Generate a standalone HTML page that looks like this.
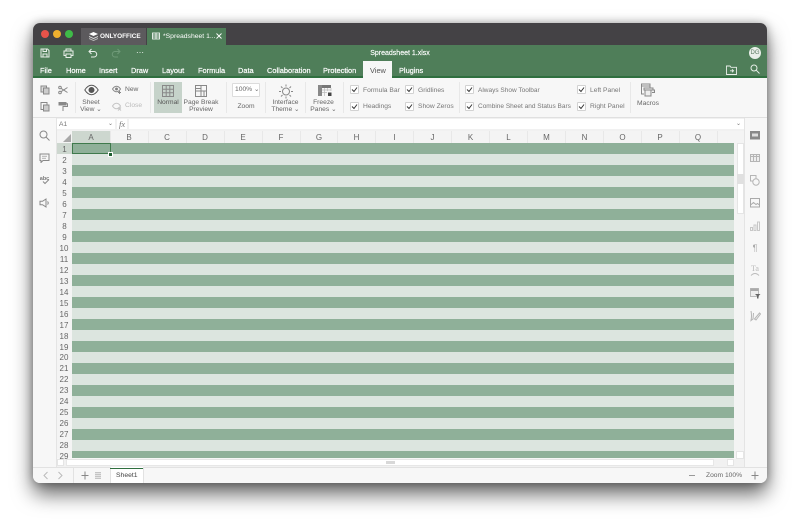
<!DOCTYPE html>
<html><head><meta charset="utf-8"><style>
html,body{margin:0;padding:0;background:#fff;width:800px;height:526px;overflow:hidden;font-family:"Liberation Sans",Arial,sans-serif}
#w{position:absolute;left:33px;top:23px;width:734px;height:460px;border-radius:7px;box-shadow:0 11px 20px rgba(0,0,0,.6),0 0 9px rgba(0,0,0,.3)}
#c{position:absolute;left:0;top:0;width:800px;height:526px;clip-path:inset(23px 33px 43px 33px round 7px);filter:blur(.3px)}
.a{position:absolute}
.t{position:absolute;white-space:nowrap;font-size:6.7px;line-height:9px;color:#666}
.c{text-align:center;transform:translateX(-50%)}
.m{color:#fff;font-size:7.4px;font-weight:400;-webkit-text-stroke:.2px #fff}
.h{color:#666;font-size:8px;line-height:11px;transform:translateX(-50%)}
.r{color:#666;font-size:8px;line-height:11px;transform:translateX(-50%)}
.cb{position:absolute;width:7px;height:7px;background:#fff;border:1px solid #d2d2d2;border-radius:1px}
.cb svg{position:absolute;left:0;top:0}
.sep{position:absolute;top:82px;height:31px;width:1px;background:#e8e8e8}
svg.i{position:absolute;fill:none;stroke:#888;stroke-width:1}
.l7{line-height:7px;text-align:center}
</style></head><body>
<div id="w"></div>
<div id="c">
<div class="a" style="left:33px;top:23px;width:734px;height:22px;background:#444245"></div>
<div class="a" style="left:33px;top:45px;width:734px;height:32px;background:#4f7e59"></div>
<div class="a" style="left:33px;top:76px;width:734px;height:1.500px;background:#2f6f3f"></div>
<div class="a" style="left:33px;top:77.500px;width:734px;height:390px;background:#f7f7f7"></div>
<div class="a" style="left:33px;top:117px;width:734px;height:1px;background:#e0e0e0"></div>

<!-- title -->
<div class="a" style="left:41px;top:30px;width:8px;height:8px;border-radius:50%;background:#e8534a"></div>
<div class="a" style="left:53px;top:30px;width:8px;height:8px;border-radius:50%;background:#eeb02f"></div>
<div class="a" style="left:65px;top:30px;width:8px;height:8px;border-radius:50%;background:#3fbb48"></div>
<div class="a" style="left:81px;top:28px;width:65px;height:17px;background:#5c5a5d"></div>
<svg class="a" style="left:88px;top:31px" width="11" height="11" viewBox="0 0 11 11"><path d="M5.5 1 10 3 5.5 5 1 3Z" fill="#fff"/><path d="M1 5 5.500 7 10 5 10 6 5.500 8 1 6Z" fill="#ddd"/><path d="M1 7 5.500 9 10 7 10 8 5.500 10 1 8Z" fill="#bbb"/></svg>
<div class="t" style="left:100px;top:32px;color:#fff;font-size:6.400px;font-weight:700">ONLYOFFICE</div>
<div class="a" style="left:147px;top:28px;width:79px;height:17px;background:#4f7e59"></div>
<svg class="a" style="left:152px;top:32px" width="8" height="8" viewBox="0 0 8 8" fill="none" stroke="#fff" stroke-width=".8"><rect x=".5" y="1" width="7" height="6"/><path d="M.5 3H7.500M.5 5H7.500M4 1V7"/></svg>
<div class="t" style="left:163px;top:32px;color:#fff;font-size:6.800px">*Spreadsheet 1...</div>
<svg class="a" style="left:215px;top:32px" width="8" height="8" viewBox="0 0 8 8" stroke="#fff" stroke-width=".9"><path d="M1.500 1.500 6.500 6.500M6.500 1.500 1.500 6.500"/></svg>

<!-- header toolbar -->
<svg class="a" style="left:40px;top:48px" width="10" height="10" viewBox="0 0 10 10" fill="none" stroke="#e8efe9" stroke-width="1"><path d="M1 1H7.500L9 2.500V9H1Z"/><path d="M3 1V3.500H6.500V1M3 9V6H7V9"/></svg>
<svg class="a" style="left:63px;top:48px" width="11" height="10" viewBox="0 0 11 10" fill="none" stroke="#e8efe9" stroke-width="1"><path d="M3 3V1H8V3M3 7.500H1V3H10V7.500H8"/><path d="M3 6H8V9.500H3Z"/></svg>
<svg class="a" style="left:88px;top:48px" width="10" height="10" viewBox="0 0 10 10" fill="none" stroke="#e8efe9" stroke-width="1"><path d="M3.500 1 1 3.500 3.500 6M1 3.500H6A2.700 2.700 0 0 1 6 9H3"/></svg>
<svg class="a" style="left:111px;top:48px" width="10" height="10" viewBox="0 0 10 10" fill="none" stroke="#6f9a78" stroke-width="1"><path d="M6.500 1 9 3.500 6.500 6M9 3.500H4A2.700 2.700 0 0 0 4 9H7"/></svg>
<div class="t" style="left:136px;top:49px;color:#e8efe9;font-size:8px;line-height:8px;letter-spacing:.2px">&#8943;</div>
<div class="t c" style="left:400px;top:49px;color:#fff;font-size:7px;-webkit-text-stroke:.15px #fff">Spreadsheet 1.xlsx</div>
<div class="a" style="left:749px;top:47px;width:12px;height:12px;border-radius:50%;background:#e9eee9;color:#5c7a62;font-size:6px;line-height:12px;text-align:center">DG</div>

<!-- tabs -->
<div class="t m" style="left:40px;top:66px">File</div>
<div class="t m" style="left:66px;top:66px">Home</div>
<div class="t m" style="left:99px;top:66px">Insert</div>
<div class="t m" style="left:131px;top:66px">Draw</div>
<div class="t m" style="left:162px;top:66px">Layout</div>
<div class="t m" style="left:198px;top:66px">Formula</div>
<div class="t m" style="left:238px;top:66px">Data</div>
<div class="t m" style="left:267px;top:66px">Collaboration</div>
<div class="t m" style="left:323px;top:66px">Protection</div>
<div class="a" style="left:362.500px;top:61px;width:29.500px;height:17px;background:#f7f7f7"></div>
<div class="t" style="left:370px;top:66px;font-size:7.400px;color:#555">View</div>
<div class="t m" style="left:399px;top:66px">Plugins</div>
<svg class="a" style="left:726px;top:65px" width="11" height="10" viewBox="0 0 11 10" fill="none" stroke="#e8efe9" stroke-width=".9"><path d="M.5 1H4L5 2.300H10.500V9.500H.5Z"/><path d="M4 5.800H7.500M6 4.300 7.500 5.800 6 7.300"/></svg>
<svg class="a" style="left:750px;top:64px" width="10" height="10" viewBox="0 0 10 10" fill="none" stroke="#e8efe9" stroke-width="1"><circle cx="4" cy="4" r="3"/><path d="M6.200 6.200 9.500 9.500"/></svg>

<!-- ribbon left -->
<svg class="i" style="left:40px;top:85px" width="10" height="10" viewBox="0 0 10 10" stroke-width=".8"><rect x="1" y="1" width="5.500" height="6" fill="#ddd"/><rect x="3.500" y="3" width="5.500" height="6" fill="#ccc"/></svg>
<svg class="i" style="left:58px;top:85px" width="10" height="10" viewBox="0 0 10 10" stroke-width=".7"><circle cx="2" cy="2.500" r="1.300"/><circle cx="2" cy="7.500" r="1.300"/><path d="M3 3.300 9.500 7.500M3 6.700 9.500 2.500"/></svg>
<svg class="i" style="left:40px;top:101px" width="10" height="11" viewBox="0 0 10 11" stroke-width=".8"><rect x="1" y="1.500" width="6" height="7" /><rect x="3.500" y="4" width="5.500" height="6" fill="#ccc"/></svg>
<svg class="i" style="left:58px;top:101px" width="10" height="11" viewBox="0 0 10 11" stroke-width=".9"><path d="M1 1.500H8V4H1Z" fill="#888"/><path d="M8 2.700H9.500V5.500H5V10"/></svg>
<div class="sep" style="left:75px"></div>
<svg class="i" style="left:84px;top:84px" width="15" height="12" viewBox="0 0 15 12" stroke="#555" stroke-width=".9"><path d="M.8 6C3 2.500 5 1.300 7.500 1.300S12 2.500 14.200 6C12 9.500 10 10.700 7.500 10.700S3 9.500 .8 6Z" stroke="#555"/><circle cx="7.500" cy="6" r="2.500" fill="#555" stroke="#555"/></svg>
<div class="t c l7" style="left:91px;top:99px">Sheet<br>View &#8964;</div>
<svg class="i" style="left:112px;top:85px" width="10" height="9" viewBox="0 0 10 9" stroke-width=".8"><path d="M.5 4C1.700 2 3 1.200 4.500 1.200S7.300 2 8.500 4C7.300 6 6 6.800 4.500 6.800S1.700 6 .5 4Z"/><circle cx="4.500" cy="4" r="1" fill="#777"/><path d="M7.500 6V9M6 7.500H9"/></svg>
<div class="t" style="left:125px;top:85px">New</div>
<svg class="i" style="left:112px;top:102px;stroke:#c4c4c4" width="10" height="9" viewBox="0 0 10 9" stroke-width=".8"><path d="M.5 4C1.700 2 3 1.200 4.500 1.200S7.300 2 8.500 4C7.300 6 6 6.800 4.500 6.800S1.700 6 .5 4Z"/><path d="M6 5.500 9 8.500M9 5.500 6 8.500"/></svg>
<div class="t" style="left:125px;top:101px;color:#bbb">Close</div>
<div class="sep" style="left:149.500px"></div>

<div class="a" style="left:154px;top:82px;width:28px;height:31px;background:#c6d3ca"></div>
<svg class="i" style="left:161px;top:84px" width="14" height="14" viewBox="0 0 14 14" stroke-width=".8"><rect x="1.500" y="1.500" width="11" height="11"/><path d="M1.500 5.200H12.500M1.500 8.800H12.500M5.200 1.500V12.500M8.800 1.500V12.500"/></svg>
<div class="t c" style="left:168px;top:98px;color:#555">Normal</div>
<svg class="i" style="left:194px;top:84px" width="14" height="14" viewBox="0 0 14 14" stroke-width=".8"><rect x="1.500" y="1.500" width="11" height="11"/><path d="M1.500 7H12.500M7 1.500V12.500M1.500 4.500H7M10 7V12.500"/></svg>
<div class="t c l7" style="left:201px;top:99px">Page Break<br>Preview</div>
<div class="sep" style="left:225.500px"></div>
<div class="a" style="left:232px;top:83px;width:26px;height:12px;background:#fff;border:1px solid #dcdcdc;border-radius:1px"></div>
<div class="t" style="left:235px;top:85px">100% &#8964;</div>
<div class="t c" style="left:246px;top:102px">Zoom</div>
<div class="sep" style="left:265px"></div>
<svg class="i" style="left:278px;top:84px" width="16" height="15" viewBox="0 0 16 15" stroke-width=".7"><circle cx="8" cy="7.500" r="3.500"/><path d="M8 .5V2.500M8 12.500V14.500M1 7.500H3M13 7.500H15M3 2.500 4.500 4M13 2.500 11.500 4M3 12.500 4.500 11M13 12.500 11.500 11"/></svg>
<div class="t c l7" style="left:285.500px;top:99px">Interface<br>Theme &#8964;</div>
<div class="sep" style="left:305px"></div>
<svg class="i" style="left:318px;top:85px" width="14" height="12" viewBox="0 0 14 12"><rect x="0" y="0" width="13" height="3" fill="#777" stroke="none"/><rect x="0" y="0" width="4" height="11" fill="#888" stroke="none"/><path d="M4 5H13M4 7.500H9M6.500 3V11M9.500 3V6M13 3V6" stroke="#bbb" stroke-width=".7"/><rect x="10" y="7.500" width="3.500" height="3.500" fill="#444" stroke="none"/></svg>
<div class="t c l7" style="left:323.500px;top:99px">Freeze<br>Panes &#8964;</div>
<div class="sep" style="left:343px"></div>

<!-- checkboxes -->
<div class="cb" style="left:350px;top:85px"><svg width="7" height="7" viewBox="0 0 7 7" fill="none" stroke="#333" stroke-width="1"><path d="M1 3.500 3 5.500 6 1.500"/></svg></div>
<div class="t" style="left:363px;top:85.500px;color:#777">Formula Bar</div>
<div class="cb" style="left:350px;top:102px"><svg width="7" height="7" viewBox="0 0 7 7" fill="none" stroke="#333" stroke-width="1"><path d="M1 3.500 3 5.500 6 1.500"/></svg></div>
<div class="t" style="left:363px;top:102px;color:#777">Headings</div>
<div class="cb" style="left:405px;top:85px"><svg width="7" height="7" viewBox="0 0 7 7" fill="none" stroke="#333" stroke-width="1"><path d="M1 3.500 3 5.500 6 1.500"/></svg></div>
<div class="t" style="left:418px;top:85.500px;color:#777">Gridlines</div>
<div class="cb" style="left:405px;top:102px"><svg width="7" height="7" viewBox="0 0 7 7" fill="none" stroke="#333" stroke-width="1"><path d="M1 3.500 3 5.500 6 1.500"/></svg></div>
<div class="t" style="left:418px;top:102px;color:#777">Show Zeros</div>
<div class="sep" style="left:459px"></div>
<div class="cb" style="left:465px;top:85px"><svg width="7" height="7" viewBox="0 0 7 7" fill="none" stroke="#333" stroke-width="1"><path d="M1 3.500 3 5.500 6 1.500"/></svg></div>
<div class="t" style="left:478px;top:85.500px;color:#777;font-size:6.500px">Always Show Toolbar</div>
<div class="cb" style="left:465px;top:102px"><svg width="7" height="7" viewBox="0 0 7 7" fill="none" stroke="#333" stroke-width="1"><path d="M1 3.500 3 5.500 6 1.500"/></svg></div>
<div class="t" style="left:478px;top:102px;color:#777;font-size:6.500px">Combine Sheet and Status Bars</div>
<div class="cb" style="left:577px;top:85px"><svg width="7" height="7" viewBox="0 0 7 7" fill="none" stroke="#333" stroke-width="1"><path d="M1 3.500 3 5.500 6 1.500"/></svg></div>
<div class="t" style="left:590px;top:85.500px;color:#777">Left Panel</div>
<div class="cb" style="left:577px;top:102px"><svg width="7" height="7" viewBox="0 0 7 7" fill="none" stroke="#333" stroke-width="1"><path d="M1 3.500 3 5.500 6 1.500"/></svg></div>
<div class="t" style="left:590px;top:102px;color:#777">Right Panel</div>
<div class="sep" style="left:630px"></div>
<svg class="i" style="left:640px;top:83px" width="16" height="15" viewBox="0 0 16 15" stroke-width=".8"><path d="M1.500 1H10V3H1.500ZM1.500 3V11H4M10 3V5"/><path d="M4 5H13V7H4ZM5 7V13H11V7M13 7 14.500 7V9.500H12" fill="#eee"/></svg>
<div class="t c" style="left:648px;top:98.500px">Macros</div>

<!-- formula bar -->
<div class="a" style="left:56px;top:118px;width:688px;height:13px;background:#f1f1f1"></div>
<div class="a" style="left:57px;top:119px;width:58px;height:10px;background:#fff"></div>
<div class="t" style="left:59px;top:119.500px;color:#777">A1</div>
<div class="t" style="left:108px;top:119.500px;color:#777;font-size:6px">&#8964;</div>
<div class="a" style="left:117px;top:119px;width:10px;height:10px;background:#fff"></div>
<div class="t" style="left:119px;top:118.500px;font:italic 8.500px/11px 'Liberation Serif',serif;color:#777">fx</div>
<div class="a" style="left:129px;top:119px;width:615px;height:10px;background:#fff"></div>
<div class="t" style="left:736px;top:119.500px;color:#777;font-size:6px">&#8964;</div>

<!-- left & right panel -->
<svg class="i" style="left:39px;top:130px" width="11" height="11" viewBox="0 0 11 11" stroke-width="1"><circle cx="4.500" cy="4.500" r="3.500"/><path d="M7 7 10.500 10.500"/></svg>
<svg class="i" style="left:39px;top:153px" width="11" height="10" viewBox="0 0 11 10" stroke-width=".9"><path d="M1 1H10V7.500H4L2 9.500V7.500H1Z"/><path d="M3 3.200H8M3 5.200H7" stroke-width=".6"/></svg>
<div class="t c" style="left:44.500px;top:176px;font-size:5.500px;font-weight:700;line-height:7px;color:#777">abc</div>
<svg class="i" style="left:40px;top:178px" width="10" height="7" viewBox="0 0 10 7" stroke-width=".9"><path d="M3 3.500 5 5.500 9 1.500"/></svg>
<svg class="i" style="left:39px;top:198px" width="11" height="10" viewBox="0 0 11 10" stroke-width=".9"><path d="M1 3.300H3.500L7 1V9L3.500 6.700H1ZM8.500 3.500Q10 5 8.500 6.500"/></svg>

<svg class="i" style="left:750px;top:131px" width="10" height="9" viewBox="0 0 10 9"><rect x=".5" y=".5" width="9" height="7.500" fill="#888"/><rect x="2" y="2.500" width="6" height="3" fill="#ddd" stroke="none"/></svg>
<svg class="i" style="left:750px;top:154px;stroke:#b5b5b5" width="10" height="8" viewBox="0 0 10 8" stroke-width=".7"><rect x=".5" y=".5" width="9" height="7" fill="#eee"/><path d="M.5 2.500H9.500M3.500 .5V7.500M6.500 .5V7.500"/></svg>
<svg class="i" style="left:750px;top:175px;stroke:#b5b5b5" width="10" height="11" viewBox="0 0 10 11" stroke-width=".7"><rect x=".5" y=".5" width="5.500" height="5.500"/><circle cx="6" cy="7" r="3.200" fill="#f7f7f7"/></svg>
<svg class="i" style="left:750px;top:198px;stroke:#aaa" width="10" height="10" viewBox="0 0 10 10" stroke-width=".7"><rect x=".5" y=".5" width="9" height="8.500"/><path d="M.5 7 3.500 4.500 6 6.500 7.500 5.500 9.500 7"/></svg>
<svg class="i" style="left:750px;top:221px;stroke:#c8c8c8" width="10" height="10" viewBox="0 0 10 10" stroke-width=".7"><path d="M.5 6.500H2.500V9.500H.5ZM4 4H6V9.500H4ZM7.500 1H9.500V9.500H7.500Z"/></svg>
<div class="t c" style="left:755px;top:243px;font-size:9px;line-height:10px;color:#aaa">&para;</div>
<div class="t c" style="left:755px;top:264px;font:8px/9px 'Liberation Serif',serif;color:#bbb">Ta</div>
<svg class="i" style="left:750px;top:272px;stroke:#bbb" width="10" height="4" viewBox="0 0 10 4" stroke-width=".6"><path d="M1 3.500Q5 -.5 9 3.500"/></svg>
<svg class="i" style="left:750px;top:288px;stroke:#bbb" width="11" height="11" viewBox="0 0 11 11" stroke-width=".7"><rect x=".5" y=".5" width="8" height="8" fill="#eee"/><rect x=".5" y=".5" width="8" height="2.500" fill="#aaa" stroke="none"/><path d="M5 6H10.500L8.500 8V10.500H7V8Z" fill="#666" stroke="none"/></svg>
<svg class="i" style="left:750px;top:310px;stroke:#b5b5b5" width="11" height="12" viewBox="0 0 11 12" stroke-width=".8"><path d="M1 1Q2 6 1 10.500L3 9 3.500 3M4.500 9 9.500 3 10.500 4 6 10Z"/></svg>

<!-- panel dividers -->
<div class="a" style="left:56px;top:118px;width:1px;height:349px;background:#e4e4e4"></div>
<div class="a" style="left:744px;top:118px;width:1px;height:349px;background:#e4e4e4"></div>

<!-- sheet -->
<div class="a" style="left:57px;top:131px;width:687px;height:327px;background:#f4f4f4"></div>
<div class="a" style="left:72px;top:143px;width:662px;height:315px;background:repeating-linear-gradient(to bottom,#8fb099 0,#8fb099 11px,#dce5df 11px,#dce5df 22px)"></div>
<div class="a" style="left:72px;top:131px;width:38px;height:12px;background:#cdd7cf"></div>
<div class="a" style="left:57px;top:143px;width:15px;height:11px;background:#cdd7cf"></div>
<svg class="a" style="left:56px;top:131px" width="16" height="12"><path d="M15 3V11H7Z" fill="#a8a8a8"/></svg>
<svg class="a" style="left:72px;top:131px" width="662" height="12" stroke="#e8e8e8"><path d="M38.500 0V12M76.500 0V12M114.500 0V12M152.500 0V12M190.500 0V12M228.500 0V12M265.500 0V12M303.500 0V12M341.500 0V12M379.500 0V12M417.500 0V12M455.500 0V12M493.500 0V12M531.500 0V12M569.500 0V12M607.500 0V12M645.500 0V12"/></svg>
<div class="t h" style="left:91px;top:132px">A</div><div class="t h" style="left:129px;top:132px">B</div><div class="t h" style="left:167px;top:132px">C</div><div class="t h" style="left:205px;top:132px">D</div><div class="t h" style="left:243px;top:132px">E</div><div class="t h" style="left:281px;top:132px">F</div><div class="t h" style="left:319px;top:132px">G</div><div class="t h" style="left:356.500px;top:132px">H</div><div class="t h" style="left:394.500px;top:132px">I</div><div class="t h" style="left:432.500px;top:132px">J</div><div class="t h" style="left:470.500px;top:132px">K</div><div class="t h" style="left:508.500px;top:132px">L</div><div class="t h" style="left:546.500px;top:132px">M</div><div class="t h" style="left:584.500px;top:132px">N</div><div class="t h" style="left:622.500px;top:132px">O</div><div class="t h" style="left:660px;top:132px">P</div><div class="t h" style="left:698px;top:132px">Q</div>
<div class="t r" style="left:64.500px;top:144px">1</div><div class="t r" style="left:64.500px;top:155px">2</div><div class="t r" style="left:64.500px;top:166px">3</div><div class="t r" style="left:64.500px;top:177px">4</div><div class="t r" style="left:64.500px;top:188px">5</div><div class="t r" style="left:64.500px;top:199px">6</div><div class="t r" style="left:64.500px;top:210px">7</div><div class="t r" style="left:64.500px;top:221px">8</div><div class="t r" style="left:64.500px;top:232px">9</div><div class="t r" style="left:64px;top:243px">10</div><div class="t r" style="left:64px;top:254px">11</div><div class="t r" style="left:64px;top:265px">12</div><div class="t r" style="left:64px;top:276px">13</div><div class="t r" style="left:64px;top:287px">14</div><div class="t r" style="left:64px;top:298px">15</div><div class="t r" style="left:64px;top:309px">16</div><div class="t r" style="left:64px;top:320px">17</div><div class="t r" style="left:64px;top:331px">18</div><div class="t r" style="left:64px;top:342px">19</div><div class="t r" style="left:64px;top:352px">20</div><div class="t r" style="left:64px;top:363px">21</div><div class="t r" style="left:64px;top:374px">22</div><div class="t r" style="left:64px;top:385px">23</div><div class="t r" style="left:64px;top:396px">24</div><div class="t r" style="left:64px;top:407px">25</div><div class="t r" style="left:64px;top:418px">26</div><div class="t r" style="left:64px;top:429px">27</div><div class="t r" style="left:64px;top:440px">28</div><div class="t r" style="left:64px;top:451px">29</div>
<div class="a" style="left:72px;top:143px;width:37px;height:9px;border:1px solid #3f7a4c"></div>
<div class="a" style="left:108px;top:152px;width:3px;height:3px;background:#1f5f30;border:.5px solid #fff"></div>

<!-- scrollbars -->
<div class="a" style="left:734px;top:143px;width:10px;height:315px;background:#f4f4f4"></div>
<div class="a" style="left:737px;top:143px;width:7px;height:71px;background:#fff;border:1px solid #e5e5e5;box-sizing:border-box"></div>
<div class="a" style="left:737px;top:174px;width:7px;height:10px;background:#e0e0e0"></div>
<div class="a" style="left:736px;top:451px;width:8px;height:8px;background:#fff;border:1px solid #e5e5e5;box-sizing:border-box"></div>
<div class="a" style="left:57px;top:459px;width:687px;height:8px;background:#f1f1f1"></div>
<div class="a" style="left:66px;top:459px;width:648px;height:7px;background:#fff;border:1px solid #e7e7e7;box-sizing:border-box"></div>
<div class="a" style="left:386px;top:461px;width:9px;height:3px;background:#d8d8d8"></div>
<div class="a" style="left:727px;top:459px;width:7px;height:7px;background:#fff;border:1px solid #e5e5e5;box-sizing:border-box"></div>
<div class="a" style="left:57px;top:459px;width:7px;height:7px;background:#fff;border:1px solid #e5e5e5;box-sizing:border-box"></div>

<!-- status bar -->
<div class="a" style="left:33px;top:467px;width:734px;height:16px;background:#f7f7f7;border-top:1px solid #e2e2e2;box-sizing:border-box"></div>
<svg class="i" style="left:43px;top:471px;stroke:#bbb" width="6" height="9" viewBox="0 0 6 9"><path d="M4.500 1 1 4.500 4.500 8"/></svg>
<svg class="i" style="left:57px;top:471px;stroke:#bbb" width="6" height="9" viewBox="0 0 6 9"><path d="M1.500 1 5 4.500 1.500 8"/></svg>
<div class="a" style="left:73px;top:468px;width:1px;height:15px;background:#e2e2e2"></div>
<svg class="i" style="left:81px;top:471px" width="8" height="9" viewBox="0 0 8 9"><path d="M4 .5V8.500M.5 4.500H7.500"/></svg>
<div class="a" style="left:95px;top:472px;width:6px;height:7px;background:repeating-linear-gradient(to bottom,#c4c4c4 0,#c4c4c4 1px,#e4e4e4 1px,#e4e4e4 2px)"></div>
<div class="a" style="left:109.500px;top:467px;width:34px;height:16px;background:#fff;border-left:1px solid #e2e2e2;border-right:1px solid #e2e2e2;box-sizing:border-box"></div>
<div class="a" style="left:110px;top:467.500px;width:33px;height:1.500px;background:#2f6f3f"></div>
<div class="t" style="left:116px;top:470.500px;color:#444;font-size:6.800px">Sheet1</div>
<div class="a" style="left:689px;top:475px;width:6px;height:1px;background:#999"></div>
<div class="t" style="left:706px;top:470.500px;color:#666">Zoom 100%</div>
<svg class="i" style="left:751px;top:471px" width="8" height="9" viewBox="0 0 8 9"><path d="M4 .5V8.500M.5 4.500H7.500"/></svg>
</div>
</body></html>
